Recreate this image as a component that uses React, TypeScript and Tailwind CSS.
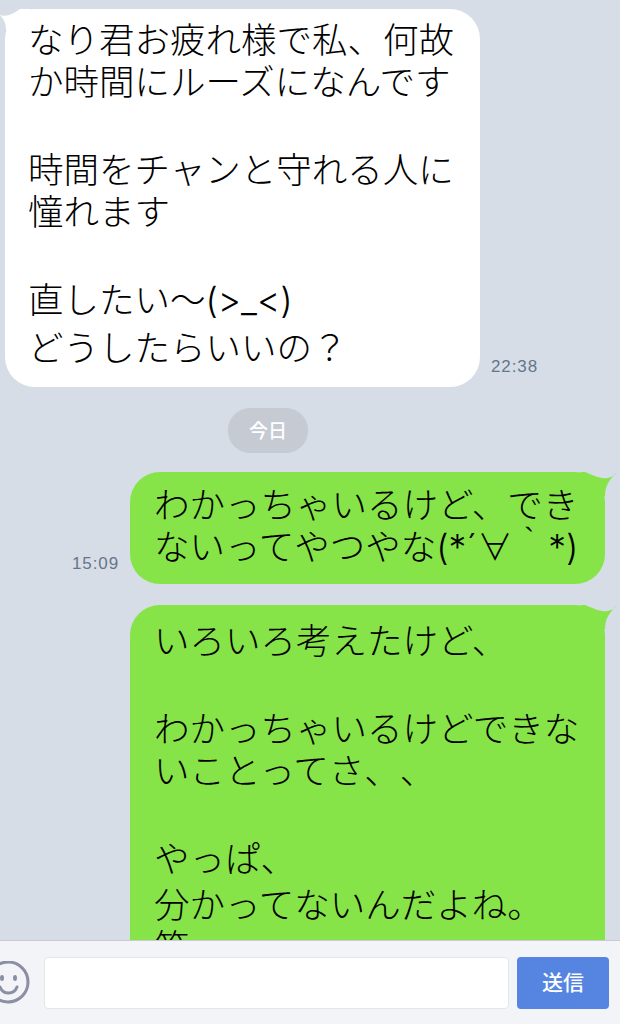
function Tail({ side, color }: { side: "left" | "right"; color: string }) {
  return side === "left" ? (
    <svg className="absolute left-[-5px] top-[-9px]" width="40" height="32" viewBox="0 0 40 32">
      <path d="M0 15 C7 17 13 14 20 9 L30 9 L30 30 L6 30 C6 24 4 19 0 15Z" fill={color} />
    </svg>
  ) : (
    <svg className="absolute right-[-12px] top-0" width="40" height="24" viewBox="0 0 40 24">
      <path d="M40 0 C37 5 31 7 25 6 C19 5 14 2 8 0 L4 0 L4 24 L28 24 C28 14 32 8 40 0Z" fill={color} />
    </svg>
  );
}

const msg = "font-['Inter','Noto_Sans_CJK_JP',sans-serif] text-[35.5px] font-light leading-[42px] text-black [text-spacing-trim:space-all]";
const stamp = "mb-[11px] text-[17px] leading-[18px] tracking-[0.9px] text-[#66758c]";

export default function App() {
  return (
    <div className="relative h-[1024px] w-[620px] overflow-hidden bg-[#d6dde6] font-['Liberation_Sans','Noto_Sans_CJK_JP',sans-serif]">
      <div className="flex items-end gap-[11px] pl-[5px] pt-[9px]">
        <div className={`relative h-[378px] w-[475px] rounded-[30px] bg-white pl-[23px] pt-[11px] ${msg}`}>
          <Tail side="left" color="#ffffff" />
          <div className="relative">なり君お疲れ様で私、何故</div>
          <div>か時間にルーズになんです</div>
          <div className="h-[46px]" />
          <div>時間をチャンと守れる人に</div>
          <div>憧れます</div>
          <div className="h-[46px]" />
          <div className="h-[48px]">直したい〜(&gt;_&lt;)</div>
          <div>どうしたらいいの？</div>
        </div>
        <span className={stamp}>22:38</span>
      </div>

      <div className="flex pl-[228px] pt-[21px]">
        <div className="flex h-[45px] w-[80px] items-center justify-center rounded-[22px] bg-[#c5cad3] pt-[3px] text-[19px] font-medium text-white">今日</div>
      </div>

      <div className="flex items-end justify-end gap-[11px] pr-[15px] pt-[19px]">
        <span className={stamp}>15:09</span>
        <div className={`relative h-[112px] w-[475px] rounded-[30px] bg-[#86e448] pl-[24px] pt-[13px] ${msg}`}>
          <Tail side="right" color="#86e448" />
          <div>わかっちゃいるけど、でき</div>
          <div>ないってやつやな(*´∀｀*)</div>
        </div>
      </div>

      <div className="flex justify-end pr-[15px] pt-[21px]">
        <div className={`relative h-[400px] w-[475px] rounded-[30px] bg-[#86e448] pl-[24px] pt-[16px] ${msg}`}>
          <Tail side="right" color="#86e448" />
          <div>いろいろ考えたけど、</div>
          <div className="h-[46px]" />
          <div>わかっちゃいるけどできな</div>
          <div>いことってさ、、</div>
          <div className="h-[46px]" />
          <div className="h-[46px]">やっぱ、</div>
          <div>分かってないんだよね。</div>
          <div>笑</div>
        </div>
      </div>

      <div className="absolute bottom-0 left-0 flex h-[84px] w-[620px] items-center gap-[13px] border-t border-[#c8ccd2] bg-[#f2f4f8] pr-[11px]">
        <svg className="ml-[-8px] shrink-0" width="39" height="44" viewBox="0 0 39 44" fill="none" stroke="#8a8fa3" strokeWidth="3">
          <circle cx="16" cy="21" r="20" />
          <ellipse cx="10" cy="17" rx="2" ry="3" fill="#8a8fa3" stroke="none" />
          <ellipse cx="23" cy="17" rx="2" ry="3" fill="#8a8fa3" stroke="none" />
          <path d="M8 26 C11 34 22 34 25 26" strokeLinecap="round" />
        </svg>
        <div className="h-[52px] w-[465px] rounded-[4px] border border-[#e3e6ea] bg-white" />
        <div className="ml-[-5px] flex h-[52px] w-[92px] items-center justify-center rounded-[4px] bg-[#5585e0] text-[21px] font-medium text-white">送信</div>
      </div>
    </div>
  );
}
